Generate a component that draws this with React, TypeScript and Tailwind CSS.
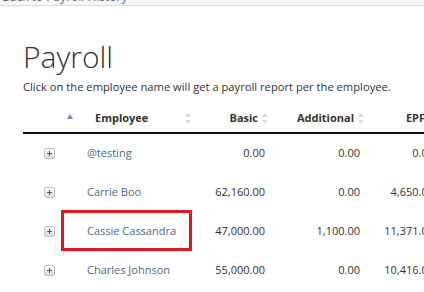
type Row = {
  name: string;
  basic: string;
  additional: string;
  epf: string;
  marked?: boolean;
};

const rows: Row[] = [
  { name: "@testing", basic: "0.00", additional: "0.00", epf: "0.00" },
  { name: "Carrie Boo", basic: "62,160.00", additional: "0.00", epf: "4,650.00" },
  { name: "Cassie Cassandra", basic: "47,000.00", additional: "1,100.00", epf: "11,371.00", marked: true },
  { name: "Charles Johnson", basic: "55,000.00", additional: "0.00", epf: "10,416.00" },
];

function SortBoth() {
  return (
    <svg width="6" height="11" viewBox="0 0 6 11" className="shrink-0">
      <path d="M3 0 L6 4 L0 4 Z" fill="#dcdcdc" />
      <path d="M0 7 L6 7 L3 11 Z" fill="#dcdcdc" />
    </svg>
  );
}

function SortAsc() {
  return (
    <svg width="6" height="5" viewBox="0 0 6 5" className="shrink-0">
      <path d="M3 0 L6 5 L0 5 Z" fill="#7f7fe0" />
    </svg>
  );
}

function ExpandButton() {
  return (
    <span className="flex h-[11px] w-[11px] items-center justify-center rounded-[2px] border border-[#c4c4c4] bg-gradient-to-b from-[#fdfdfd] to-[#dcdcdc]">
      <svg width="5" height="5" viewBox="0 0 5 5">
        <path d="M2 0 H3 V2 H5 V3 H3 V5 H2 V3 H0 V2 H2 Z" fill="#555" />
      </svg>
    </span>
  );
}

const cols = "grid grid-cols-[64px_108px_75px_95px_75px]";

export default function App() {
  return (
    <div className="h-[292px] w-[424px] overflow-hidden bg-white font-['Open_Sans',sans-serif] text-[#333]">
      <div className="h-[6px] overflow-hidden border-b border-[#dedede] bg-[#f6f6f6]">
        <a className="-mt-[12px] block pl-[2px] text-[12px] leading-[17px] text-[#557289]">Back to Payroll History</a>
      </div>

      <div className="pl-[23px]">
        <h1 className="mt-[33px] text-[30px] font-light leading-[36px] text-[#333]">Payroll</h1>
        <p className="mt-[4px] text-[11.2px] leading-[15px] text-[#333]">
          Click on the employee name will get a payroll report per the employee.
        </p>

        <div className="mt-[11px] w-[417px]">
          <div className={`${cols} h-[29px] border-b-2 border-[#111] text-[11px] font-bold`}>
            <div className="flex justify-end pr-[14px] pt-[9px]">
              <SortAsc />
            </div>
            <div className="flex items-center justify-between pl-[8px] pr-[4px]">
              <span>Employee</span>
              <SortBoth />
            </div>
            <div className="flex items-center justify-end gap-[4px] pr-[2px]">
              <span>Basic</span>
              <SortBoth />
            </div>
            <div className="flex items-center justify-end gap-[4px] pr-[1px]">
              <span>Additional</span>
              <SortBoth />
            </div>
            <div className="flex items-center justify-end gap-[4px] pr-[5px]">
              <span>EPF</span>
              <SortBoth />
            </div>
          </div>

          {rows.map((r) => (
            <div key={r.name} className={`${cols} relative h-[39px] items-center text-[11px]`}>
              <div className="pl-[21px]">
                <ExpandButton />
              </div>
              <a className="text-[#4b6b82]">{r.name}</a>
              <div className="pr-[5px] text-right">{r.basic}</div>
              <div className="pr-[5px] text-right">{r.additional}</div>
              <div className="pr-[6px] text-right">{r.epf}</div>
              {r.marked && (
                <div className="absolute left-[38px] top-[-2px] h-[41px] w-[131px] border-[3px] border-[#e3161f]" />
              )}
            </div>
          ))}
        </div>
      </div>
    </div>
  );
}
